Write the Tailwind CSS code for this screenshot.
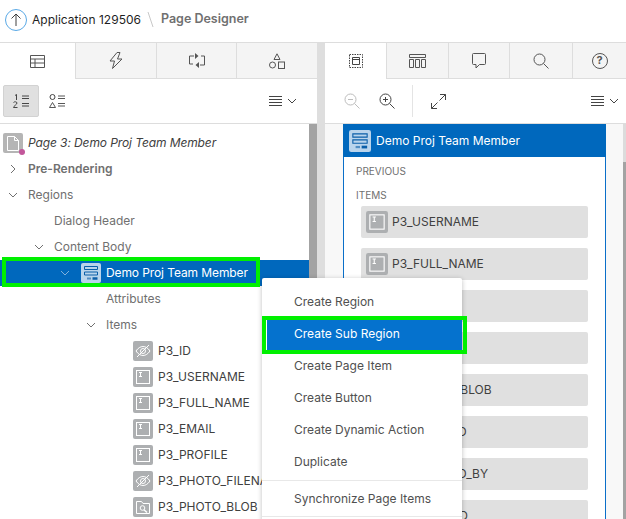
<!DOCTYPE html>
<html lang="en">
<head>
  <meta charset="UTF-8" />
  <title>Page Designer</title>
  <script src="https://cdn.jsdelivr.net/npm/@tailwindcss/browser@4"></script>
</head>
<body class="bg-white font-['Inter','Liberation_Sans',sans-serif] text-[12px] text-[#404040]">
  <!-- shared icons -->
  <svg class="hidden">
    <symbol id="chev-down" viewBox="0 0 10 10"><path d="M1 3l4 4 4-4" fill="none" stroke="currentColor"/></symbol>
    <symbol id="chev-right" viewBox="0 0 10 10"><path d="M3 1l4 4-4 4" fill="none" stroke="currentColor"/></symbol>
    <symbol id="menu-lines" viewBox="0 0 13 11"><path d="M0 .5h13M0 3.5h13M0 6.5h13M0 9.5h13" stroke="currentColor"/></symbol>
    <symbol id="item-text" viewBox="0 0 20 20"><rect width="20" height="20" rx="2" fill="#adafb1"/><rect x="3.500" y="3.500" width="13" height="13" fill="none" stroke="#fff"/><path d="M6 5.500h3M6 9.500h3M7.500 5.500v4" stroke="#fff" fill="none"/></symbol>
    <symbol id="item-hidden" viewBox="0 0 20 20"><rect width="20" height="20" rx="2" fill="#adafb1"/><path d="M3 10c2-3 4.500-4.500 7-4.500s5 1.500 7 4.500c-2 3-4.500 4.500-7 4.500s-5-1.500-7-4.500z" fill="none" stroke="#fff"/><circle cx="10" cy="10" r="2.500" fill="none" stroke="#fff"/><path d="M4 16L16 4" stroke="#fff"/></symbol>
    <symbol id="region" viewBox="0 0 20 20"><rect width="20" height="20" rx="2" fill="#b9d4ec"/><path d="M3.500 3.500h13v3h-13zM3.500 9h13v3h-13z" fill="none" stroke="#0a5ea8"/><path d="M6 15.500h4" stroke="#0a5ea8" stroke-width="2" fill="none" opacity=".6"/><path d="M11.500 15.500h5" stroke="#0a5ea8" stroke-width="2.500"/></symbol>
  </svg>

  <div class="relative w-[626px] h-[519px] overflow-hidden">
    <!-- top bar -->
    <header class="h-[42px] flex items-center pl-[5px] pb-[3px]">
      <span class="w-[22px] h-[22px] rounded-full border border-[#5aa9e6] flex items-center justify-center mr-[5px]">
        <svg class="w-[12px] h-[14px] text-[#404040]" viewBox="0 0 12 14"><path d="M6 13V1M1.500 5.500L6 1l4.500 4.500" fill="none" stroke="currentColor"/></svg>
      </span>
      <span class="text-[#1f1f1f] text-[12px]">Application 129506</span>
      <svg class="w-[8px] h-[17px] ml-[6px] mr-[6px]" viewBox="0 0 8 17"><path d="M1 1l5 15" stroke="#c8c8c8"/></svg>
      <span class="font-semibold text-[#707070] text-[12.500px]">Page Designer</span>
    </header>

    <main class="flex h-[477px] border-t border-[#ddd]">
      <!-- left pane -->
      <section class="w-[317px] flex flex-col shrink-0">
        <div class="flex h-[36px] shrink-0">
          <div class="w-[76px] flex items-center justify-center bg-white border-r border-[#ddd]">
            <svg class="w-[15px] h-[13px] text-[#555]" viewBox="0 0 15 13"><path d="M.5.500h14v12H.5zM.5 4h14M.5 8h14M5 4v8.500" fill="none" stroke="currentColor"/></svg>
          </div>
          <div class="w-[81px] flex items-center justify-center bg-[#f4f4f4] border-r border-b border-[#ddd]">
            <svg class="w-[14px] h-[17px] text-[#555]" viewBox="0 0 14 17"><path d="M8 .500L1 9h4.500L3.500 16.500 13 7H8.500L11 .500z" fill="none" stroke="currentColor"/></svg>
          </div>
          <div class="w-[80px] flex items-center justify-center bg-[#f4f4f4] border-r border-b border-[#ddd]">
            <svg class="w-[16px] h-[15px] text-[#555]" viewBox="0 0 16 15"><path d="M5 3H.500v8H4M11 12h4.500V3H12" fill="none" stroke="currentColor"/><path d="M6 0l3.500 3L6 6zM10 9l-3.500 3 3.500 3z" fill="currentColor"/></svg>
          </div>
          <div class="flex-1 flex items-center justify-center bg-[#f4f4f4] border-b border-[#ddd]">
            <svg class="w-[16px] h-[16px] text-[#555]" viewBox="0 0 16 16"><path d="M8 .800L11 6.500H5z" fill="none" stroke="currentColor"/><circle cx="3.500" cy="12" r="3" fill="none" stroke="currentColor"/><rect x="9.500" y="9" width="6" height="6.500" fill="none" stroke="currentColor"/></svg>
          </div>
        </div>
        <div class="h-[45px] shrink-0 flex items-center pl-[3px] pr-[20px] border-b border-[#ddd]">
          <button class="w-[36px] h-[32px] bg-[#e0e0e0] border border-[#d2d2d2] rounded-[2px] flex items-center justify-center">
            <svg class="w-[16px] h-[14px] text-[#333]" viewBox="0 0 16 14"><path d="M2 1.500L3.500.500V6M.500 8.500c.5-1 3.500-1 3.500.5 0 1.500-3.500 3-3.500 4.500H4.500M9 2h7M9 4.500h7M9 9.500h7M9 12h7" fill="none" stroke="currentColor" stroke-width=".9"/></svg>
          </button>
          <svg class="w-[16px] h-[14px] ml-[10px] text-[#444]" viewBox="0 0 16 14"><circle cx="3.500" cy="3" r="2.500" fill="none" stroke="currentColor"/><path d="M3.500 8.500l3 5h-6zM9 2h7M9 4.500h7M9 9.500h7M9 12h7" fill="none" stroke="currentColor" stroke-width=".9"/></svg>
          <div class="ml-auto flex items-center gap-[5px] text-[#444]">
            <svg class="w-[13px] h-[11px]"><use href="#menu-lines"/></svg>
            <svg class="w-[10px] h-[10px]"><use href="#chev-down"/></svg>
          </div>
        </div>
        <div class="flex flex-1 min-h-0">
          <div class="flex-1 min-w-0 overflow-hidden pt-[6px] text-[#707070]">
            <div class="h-[26px] flex items-center pl-[3px]">
              <span class="relative w-[20px] h-[20px] mr-[5px] bg-[#b5b5b5] rounded-[2px] flex items-center justify-center">
                <svg class="w-[12px] h-[15px]" viewBox="0 0 12 15"><path d="M.500.500h7l4 4v10H.500zM7.500.500v4h4" fill="none" stroke="#fff"/></svg>
                <span class="absolute -right-[2px] -bottom-[2px] w-[6px] h-[6px] rounded-full bg-[#c2579a]"></span>
              </span>
              <span class="italic text-[#404040] tracking-[-0.1px]">Page 3: Demo Proj Team Member</span>
            </div>
            <div class="h-[26px] flex items-center pl-[8px] gap-[10px]"><svg class="w-[10px] h-[10px]"><use href="#chev-right"/></svg><span class="font-semibold">Pre-Rendering</span></div>
            <div class="h-[26px] flex items-center pl-[8px] gap-[10px]"><svg class="w-[10px] h-[10px]"><use href="#chev-down"/></svg><span>Regions</span></div>
            <div class="h-[26px] flex items-center pl-[54px]">Dialog Header</div>
            <div class="h-[26px] flex items-center pl-[34px] gap-[10px]"><svg class="w-[10px] h-[10px]"><use href="#chev-down"/></svg><span>Content Body</span></div>
            <div class="h-[26px] flex items-center pl-[60px] bg-[#0068bd] text-white">
              <svg class="w-[10px] h-[10px] mr-[11px] text-[#7fb0dc]"><use href="#chev-down"/></svg>
              <svg class="w-[20px] h-[20px] mr-[5px]"><use href="#region"/></svg>
              <span class="tracking-[-0.1px]">Demo Proj Team Member</span>
            </div>
            <div class="h-[26px] flex items-center pl-[106px]">Attributes</div>
            <div class="h-[26px] flex items-center pl-[86px] gap-[10px]"><svg class="w-[10px] h-[10px]"><use href="#chev-down"/></svg><span>Items</span></div>
            <div class="h-[26px] flex items-center pl-[133px] gap-[5px] text-[#404040]"><svg class="w-[20px] h-[20px]"><use href="#item-hidden"/></svg><span>P3_ID</span></div>
            <div class="h-[26px] flex items-center pl-[133px] gap-[5px] text-[#404040]"><svg class="w-[20px] h-[20px]"><use href="#item-text"/></svg><span>P3_USERNAME</span></div>
            <div class="h-[26px] flex items-center pl-[133px] gap-[5px] text-[#404040]"><svg class="w-[20px] h-[20px]"><use href="#item-text"/></svg><span>P3_FULL_NAME</span></div>
            <div class="h-[26px] flex items-center pl-[133px] gap-[5px] text-[#404040]"><svg class="w-[20px] h-[20px]"><use href="#item-text"/></svg><span>P3_EMAIL</span></div>
            <div class="h-[26px] flex items-center pl-[133px] gap-[5px] text-[#404040]"><svg class="w-[20px] h-[20px]"><use href="#item-text"/></svg><span>P3_PROFILE</span></div>
            <div class="h-[26px] flex items-center pl-[133px] gap-[5px] text-[#404040] whitespace-nowrap"><svg class="w-[20px] h-[20px] shrink-0"><use href="#item-hidden"/></svg><span>P3_PHOTO_FILENAME</span></div>
            <div class="h-[26px] flex items-center pl-[133px] gap-[5px] text-[#404040]">
              <svg class="w-[20px] h-[20px]" viewBox="0 0 20 20"><rect width="20" height="20" rx="2" fill="#adafb1"/><path d="M3.500 16.500v-12h5l1.500 2h6.500v10z" fill="none" stroke="#fff"/><circle cx="9.500" cy="11" r="2.300" fill="none" stroke="#fff"/><path d="M11 12.800l3 2.700" stroke="#fff" stroke-width="1.500"/></svg>
              <span>P3_PHOTO_BLOB</span>
            </div>
          </div>
          <div class="w-[8px] shrink-0 bg-[#a3a3a3]"></div>
        </div>
      </section>

      <!-- splitter -->
      <div class="w-[8px] shrink-0 bg-[#dedede]"></div>

      <!-- right pane -->
      <section class="flex-1 min-w-0 flex flex-col">
        <div class="flex h-[36px] shrink-0">
          <div class="w-[62px] flex items-center justify-center bg-white border-r border-[#ddd]">
            <svg class="w-[14px] h-[14px] text-[#444]" viewBox="0 0 14 14"><path d="M.500.500h13v13H.500z" fill="none" stroke="currentColor" stroke-dasharray="1.500 1"/><path d="M3.500 3.500h7v7h-7zM3.500 5.500h7" fill="none" stroke="currentColor"/></svg>
          </div>
          <div class="w-[62px] flex items-center justify-center bg-[#f4f4f4] border-r border-b border-[#ddd]">
            <svg class="w-[17px] h-[14px] text-[#555]" viewBox="0 0 17 14"><path d="M.500.500h16v3H.500zM.500 5.500h4v8h-4zM6.500 5.500h4v8h-4zM12.500 5.500h4v8h-4z" fill="none" stroke="currentColor"/></svg>
          </div>
          <div class="w-[61px] flex items-center justify-center bg-[#f4f4f4] border-r border-b border-[#ddd]">
            <svg class="w-[14px] h-[16px] text-[#555]" viewBox="0 0 14 16"><path d="M1.500.500h11a1 1 0 0 1 1 1v9a1 1 0 0 1-1 1H7.500L4 15v-3.500H1.500a1 1 0 0 1-1-1v-9a1 1 0 0 1 1-1z" fill="none" stroke="currentColor"/></svg>
          </div>
          <div class="w-[63px] flex items-center justify-center bg-[#f4f4f4] border-r border-b border-[#ddd]">
            <svg class="w-[16px] h-[16px] text-[#555]" viewBox="0 0 16 16"><circle cx="6.500" cy="6.500" r="5.500" fill="none" stroke="currentColor"/><path d="M10.500 10.500l5 5" stroke="currentColor"/></svg>
          </div>
          <div class="flex-1 flex items-center justify-center bg-[#f4f4f4] border-b border-[#ddd]">
            <span class="w-[16px] h-[16px] rounded-full border border-[#555] flex items-center justify-center text-[11px] font-bold text-[#555]">?</span>
          </div>
        </div>
        <div class="h-[45px] shrink-0 flex items-center pl-[19px] pr-[7px] border-b border-[#ddd]">
          <svg class="w-[16px] h-[16px] text-[#bdbdbd]" viewBox="0 0 16 16"><circle cx="6.500" cy="6.500" r="5.500" fill="none" stroke="currentColor"/><path d="M10.500 10.500l5 5M4 6.500h5" stroke="currentColor"/></svg>
          <svg class="w-[16px] h-[16px] ml-[19px] text-[#444]" viewBox="0 0 16 16"><circle cx="6.500" cy="6.500" r="5.500" fill="none" stroke="currentColor"/><path d="M10.500 10.500l5 5M4 6.500h5M6.500 4v5" stroke="currentColor"/></svg>
          <span class="w-px h-[32px] bg-[#e4e4e4] ml-[17px]"></span>
          <svg class="w-[15px] h-[15px] ml-[18px] text-[#444]" viewBox="0 0 15 15"><path d="M9 .500h5.500V6M14.500.500l-6 6M.500 9v5.500H6M.500 14.500l6-6" fill="none" stroke="currentColor"/></svg>
          <div class="ml-auto flex items-center gap-[5px] text-[#444]">
            <svg class="w-[13px] h-[11px]"><use href="#menu-lines"/></svg>
            <svg class="w-[10px] h-[10px]"><use href="#chev-down"/></svg>
          </div>
        </div>
        <div class="flex flex-1 min-h-0">
          <div class="flex-1 min-w-0 bg-[#f8f8f8] pl-[18px] overflow-hidden">
            <div class="w-[263px] h-full bg-white border-x border-[#0a6fc9]">
              <div class="h-[33px] -mx-px bg-[#0068bd] flex items-center pl-[6px] text-white">
                <svg class="w-[22px] h-[22px] mr-[5px]"><use href="#region"/></svg>
                <span>Demo Proj Team Member</span>
              </div>
              <div class="h-[22px] flex items-end pl-[12px] text-[10px] text-[#707070]">PREVIOUS</div>
              <div class="h-[24px] flex items-end pl-[12px] text-[10px] text-[#707070]">ITEMS</div>
              <div class="pt-[3px] pl-[17px] flex flex-col gap-[10px]">
                <div class="w-[227px] h-[32px] bg-[#e0e0e0] rounded-[2px] flex items-center pl-[5px] gap-[4px] shrink-0"><svg class="w-[22px] h-[22px]"><use href="#item-text"/></svg>P3_USERNAME</div>
                <div class="w-[227px] h-[32px] bg-[#e0e0e0] rounded-[2px] flex items-center pl-[5px] gap-[4px] shrink-0"><svg class="w-[22px] h-[22px]"><use href="#item-text"/></svg>P3_FULL_NAME</div>
                <div class="w-[227px] h-[32px] bg-[#e0e0e0] rounded-[2px] flex items-center pl-[5px] gap-[4px] shrink-0"><svg class="w-[22px] h-[22px]"><use href="#item-text"/></svg>P3_EMAIL</div>
                <div class="w-[227px] h-[32px] bg-[#e0e0e0] rounded-[2px] flex items-center pl-[5px] gap-[4px] shrink-0"><svg class="w-[22px] h-[22px]"><use href="#item-text"/></svg>P3_PROFILE</div>
                <div class="w-[227px] h-[32px] bg-[#e0e0e0] rounded-[2px] flex items-center pl-[5px] gap-[4px] shrink-0"><svg class="w-[22px] h-[22px]"><use href="#item-text"/></svg>P3_PHOTO_BLOB</div>
                <div class="w-[227px] h-[32px] bg-[#e0e0e0] rounded-[2px] flex items-center pl-[5px] gap-[4px] shrink-0"><svg class="w-[22px] h-[22px]"><use href="#item-text"/></svg>P3_CREATED</div>
                <div class="w-[227px] h-[32px] bg-[#e0e0e0] rounded-[2px] flex items-center pl-[5px] gap-[4px] shrink-0"><svg class="w-[22px] h-[22px]"><use href="#item-text"/></svg>P3_CREATED_BY</div>
                <div class="w-[227px] h-[32px] bg-[#e0e0e0] rounded-[2px] flex items-center pl-[5px] gap-[4px] shrink-0"><svg class="w-[22px] h-[22px]"><use href="#item-text"/></svg>P3_UPDATED</div>
              </div>
            </div>
          </div>
          <!-- canvas scrollbar -->
          <div class="w-[3px] shrink-0 flex flex-col">
            <div class="h-[38px] bg-[#dcdcdc]"></div>
            <div class="flex-1 bg-[#a3a3a3]"></div>
          </div>
        </div>
      </section>
    </main>

    <!-- context menu -->
    <div class="absolute left-[262px] top-[278px] w-[200px] h-[250px] bg-white rounded-[2px] shadow-[0_1px_5px_rgba(0,0,0,0.25)] pt-[8px] text-[#505050]">
      <div class="h-[32px] flex items-center pl-[32px]">Create Region</div>
      <div class="h-[32px] flex items-center ml-[5px] pl-[27px] bg-[#0572ce] text-white">Create Sub Region</div>
      <div class="h-[32px] flex items-center pl-[32px]">Create Page Item</div>
      <div class="h-[32px] flex items-center pl-[32px]">Create Button</div>
      <div class="h-[32px] flex items-center pl-[32px]">Create Dynamic Action</div>
      <div class="h-[32px] flex items-center pl-[32px]">Duplicate</div>
      <div class="h-[37px] mt-[2px] flex items-center pl-[32px] border-y border-[#e8e8e8]">Synchronize Page Items</div>
    </div>

    <!-- green annotation boxes -->
    <div class="absolute left-[2px] top-[257px] w-[258px] h-[30px] border-[4px] border-[#00f000]"></div>
    <div class="absolute left-[262px] top-[316px] w-[205px] h-[38px] border-[4px] border-[#00f000]"></div>
  </div>
</body>
</html>
